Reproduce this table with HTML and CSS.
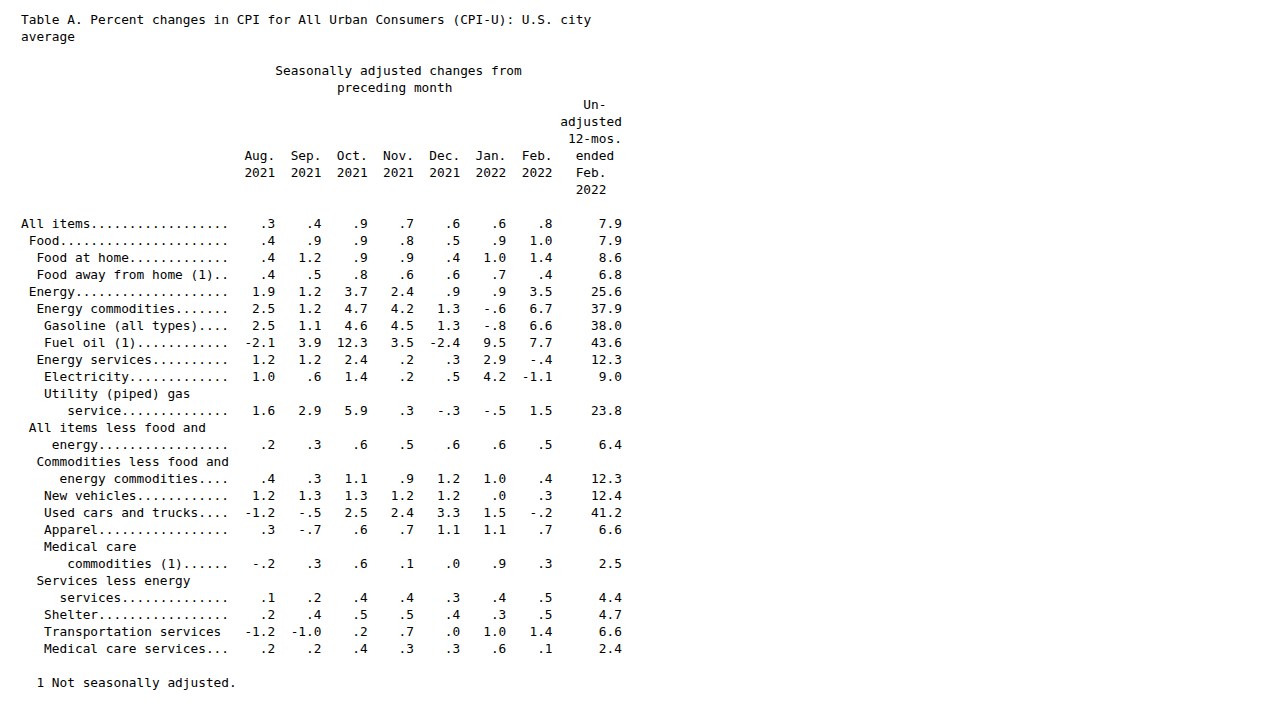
FILE: index.html
```html
<!DOCTYPE html>
<html lang="en">
<head>
<meta charset="utf-8">
<title>Table A. Percent changes in CPI for All Urban Consumers (CPI-U)</title>
<link rel="stylesheet" href="styles.css">
</head>
<body>
<div class="doc">
  <div class="line">Table A. Percent changes in CPI for All Urban Consumers (CPI-U): U.S. city</div>
  <div class="line">average</div>
  <div class="line"></div>
  <div class="line c33">Seasonally adjusted changes from</div>
  <div class="line c41">preceding month</div>

  <div class="row"><span class="label"></span><span></span><span></span><span></span><span></span><span></span><span></span><span></span><span class="tw p4">Un-</span></div>
  <div class="row"><span class="label"></span><span></span><span></span><span></span><span></span><span></span><span></span><span></span><span class="tw p1">adjusted</span></div>
  <div class="row"><span class="label"></span><span></span><span></span><span></span><span></span><span></span><span></span><span></span><span class="tw p2">12-mos.</span></div>
  <div class="row"><span class="label"></span><span>Aug.</span><span>Sep.</span><span>Oct.</span><span>Nov.</span><span>Dec.</span><span>Jan.</span><span>Feb.</span><span class="tw p3">ended</span></div>
  <div class="row"><span class="label"></span><span>2021</span><span>2021</span><span>2021</span><span>2021</span><span>2021</span><span>2022</span><span>2022</span><span class="tw p3">Feb.</span></div>
  <div class="row"><span class="label"></span><span></span><span></span><span></span><span></span><span></span><span></span><span></span><span class="tw p3">2022</span></div>
  <div class="line"></div>

  <div class="row"><span class="label l0">All items..................</span><span>.3</span><span>.4</span><span>.9</span><span>.7</span><span>.6</span><span>.6</span><span>.8</span><span>7.9</span></div>
  <div class="row"><span class="label l1">Food......................</span><span>.4</span><span>.9</span><span>.9</span><span>.8</span><span>.5</span><span>.9</span><span>1.0</span><span>7.9</span></div>
  <div class="row"><span class="label l2">Food at home.............</span><span>.4</span><span>1.2</span><span>.9</span><span>.9</span><span>.4</span><span>1.0</span><span>1.4</span><span>8.6</span></div>
  <div class="row"><span class="label l2">Food away from home (1)..</span><span>.4</span><span>.5</span><span>.8</span><span>.6</span><span>.6</span><span>.7</span><span>.4</span><span>6.8</span></div>
  <div class="row"><span class="label l1">Energy....................</span><span>1.9</span><span>1.2</span><span>3.7</span><span>2.4</span><span>.9</span><span>.9</span><span>3.5</span><span>25.6</span></div>
  <div class="row"><span class="label l2">Energy commodities.......</span><span>2.5</span><span>1.2</span><span>4.7</span><span>4.2</span><span>1.3</span><span>-.6</span><span>6.7</span><span>37.9</span></div>
  <div class="row"><span class="label l3">Gasoline (all types)....</span><span>2.5</span><span>1.1</span><span>4.6</span><span>4.5</span><span>1.3</span><span>-.8</span><span>6.6</span><span>38.0</span></div>
  <div class="row"><span class="label l3">Fuel oil (1)............</span><span>-2.1</span><span>3.9</span><span>12.3</span><span>3.5</span><span>-2.4</span><span>9.5</span><span>7.7</span><span>43.6</span></div>
  <div class="row"><span class="label l2">Energy services..........</span><span>1.2</span><span>1.2</span><span>2.4</span><span>.2</span><span>.3</span><span>2.9</span><span>-.4</span><span>12.3</span></div>
  <div class="row"><span class="label l3">Electricity.............</span><span>1.0</span><span>.6</span><span>1.4</span><span>.2</span><span>.5</span><span>4.2</span><span>-1.1</span><span>9.0</span></div>
  <div class="row"><span class="label l3">Utility (piped) gas</span></div>
  <div class="row"><span class="label l6">service..............</span><span>1.6</span><span>2.9</span><span>5.9</span><span>.3</span><span>-.3</span><span>-.5</span><span>1.5</span><span>23.8</span></div>
  <div class="row"><span class="label l1">All items less food and</span></div>
  <div class="row"><span class="label l4">energy.................</span><span>.2</span><span>.3</span><span>.6</span><span>.5</span><span>.6</span><span>.6</span><span>.5</span><span>6.4</span></div>
  <div class="row"><span class="label l2">Commodities less food and</span></div>
  <div class="row"><span class="label l5">energy commodities....</span><span>.4</span><span>.3</span><span>1.1</span><span>.9</span><span>1.2</span><span>1.0</span><span>.4</span><span>12.3</span></div>
  <div class="row"><span class="label l3">New vehicles............</span><span>1.2</span><span>1.3</span><span>1.3</span><span>1.2</span><span>1.2</span><span>.0</span><span>.3</span><span>12.4</span></div>
  <div class="row"><span class="label l3">Used cars and trucks....</span><span>-1.2</span><span>-.5</span><span>2.5</span><span>2.4</span><span>3.3</span><span>1.5</span><span>-.2</span><span>41.2</span></div>
  <div class="row"><span class="label l3">Apparel.................</span><span>.3</span><span>-.7</span><span>.6</span><span>.7</span><span>1.1</span><span>1.1</span><span>.7</span><span>6.6</span></div>
  <div class="row"><span class="label l3">Medical care</span></div>
  <div class="row"><span class="label l6">commodities (1)......</span><span>-.2</span><span>.3</span><span>.6</span><span>.1</span><span>.0</span><span>.9</span><span>.3</span><span>2.5</span></div>
  <div class="row"><span class="label l2">Services less energy</span></div>
  <div class="row"><span class="label l5">services..............</span><span>.1</span><span>.2</span><span>.4</span><span>.4</span><span>.3</span><span>.4</span><span>.5</span><span>4.4</span></div>
  <div class="row"><span class="label l3">Shelter.................</span><span>.2</span><span>.4</span><span>.5</span><span>.5</span><span>.4</span><span>.3</span><span>.5</span><span>4.7</span></div>
  <div class="row"><span class="label l3">Transportation services</span><span>-1.2</span><span>-1.0</span><span>.2</span><span>.7</span><span>.0</span><span>1.0</span><span>1.4</span><span>6.6</span></div>
  <div class="row"><span class="label l3">Medical care services...</span><span>.2</span><span>.2</span><span>.4</span><span>.3</span><span>.3</span><span>.6</span><span>.1</span><span>2.4</span></div>
  <div class="line"></div>
  <div class="line c2">1 Not seasonally adjusted.</div>
</div>
</body>
</html>
```

FILE: styles.css
```css
html, body {
  margin: 0;
  padding: 0;
  background: #ffffff;
}

body {
  font-family: "DejaVu Sans Mono", "Liberation Mono", monospace;
  font-size: 12.8px;
  line-height: 17px;
  color: #000000;
}

.doc {
  padding: 11px 0 0 21px;
}

.line {
  height: 17px;
  white-space: pre;
}

.c2 { padding-left: 2ch; }
.c33 { padding-left: 33ch; }
.c41 { padding-left: 41ch; }

.row {
  display: grid;
  grid-template-columns: 27ch repeat(7, 6ch) 9ch;
  height: 17px;
  white-space: pre;
}

.row > span {
  text-align: right;
}

.row > .label {
  text-align: left;
  overflow: hidden;
}

.row > .tw {
  text-align: left;
}

.l0 { padding-left: 0; }
.l1 { padding-left: 1ch; }
.l2 { padding-left: 2ch; }
.l3 { padding-left: 3ch; }
.l4 { padding-left: 4ch; }
.l5 { padding-left: 5ch; }
.l6 { padding-left: 6ch; }

.p1 { padding-left: 1ch; }
.p2 { padding-left: 2ch; }
.p3 { padding-left: 3ch; }
.p4 { padding-left: 4ch; }
```
